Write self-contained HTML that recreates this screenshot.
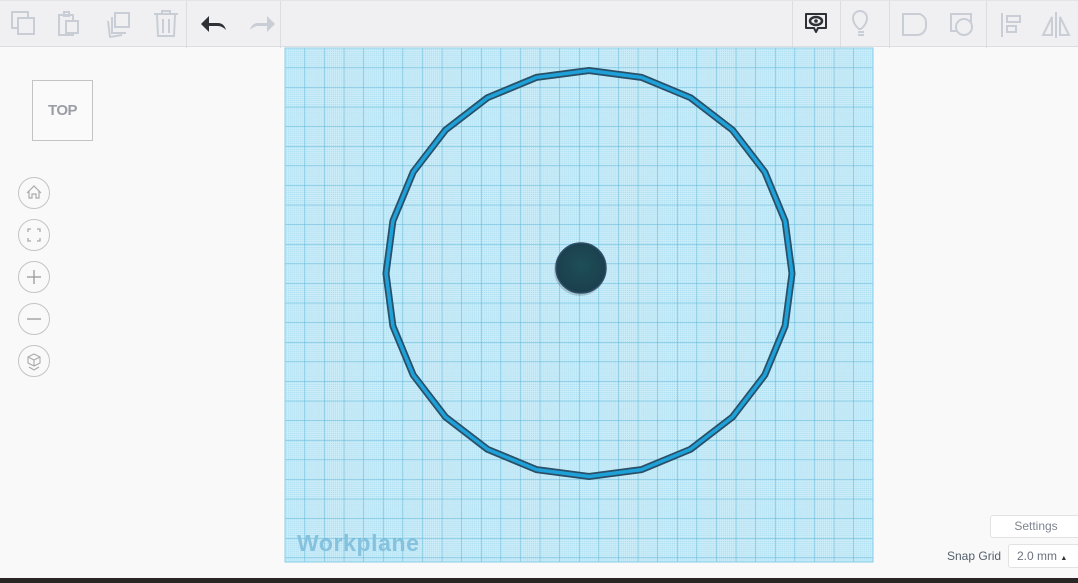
<!DOCTYPE html>
<html><head><style>
body{margin:0;width:1078px;height:583px;overflow:hidden;background:#f9f9f9;font-family:"Liberation Sans",sans-serif;position:relative}
.tb{position:absolute;left:0;top:0;width:1078px;height:47px;background:#f0f0f2;border-bottom:1px solid #dcdde0;border-top:1px solid #e4e4e6;box-sizing:border-box}
.sep{position:absolute;top:0;width:1px;height:47px;background:#dcdde0}
.nav{position:absolute;left:18px;width:32px;height:32px;border:1px solid #c4c4c4;border-radius:50%;box-sizing:border-box}
</style></head><body>
<div class="tb">
<div class="sep" style="left:186px"></div><div class="sep" style="left:280px"></div>
<div class="sep" style="left:792px"></div><div class="sep" style="left:840px"></div><div class="sep" style="left:889px"></div><div class="sep" style="left:986px"></div>
<svg width="1078" height="47" style="position:absolute;left:0;top:0" fill="none" stroke-width="2">
<g stroke="#c9ced6">
<rect x="12" y="11" width="16" height="16"/><rect x="18" y="17" width="16" height="16" fill="#f0f0f2"/>
<rect x="59" y="14" width="14" height="20"/><rect x="66" y="20" width="12" height="12" fill="#f0f0f2"/><rect x="64" y="11" width="5" height="4"/>
<rect x="115" y="12" width="14" height="14"/><path d="M112 16v16h14"/><path d="M108 20l2 16 12-2"/>
<path d="M154 13h24M162 13v-3h8v3M157 14l1 21h16l1-21M163 18v14M169 18v14"/>
</g>
<path d="M206 22h12q6 0 8 7q-4-4-8-4h-12z" fill="#2e3236"/><path d="M201 23l8-8v16z" fill="#2e3236"/>
<path d="M270 22h-12q-6 0-8 7q4-4 8-4h12z" fill="#c9ced6"/><path d="M275 23l-8-8v16z" fill="#c9ced6"/>
<path d="M806 13h20v14h-8l-2 4-2-4h-8z" stroke="#2e3236" stroke-linejoin="round"/><ellipse cx="816" cy="20" rx="6" ry="4" stroke="#2e3236" stroke-width="2.5"/><circle cx="816" cy="20" r="1.8" fill="#2e3236"/>
<g stroke="#c9ced6">
<path d="M859 28q-6-5-6-11a7 7 0 0 1 14 0q0 6-6 11zM858 31h6M858 34h6"/>
<path d="M903 13h17q6 3 6 8v4a9 9 0 0 1-9 9h-14z"/>
<rect x="951" y="13" width="20" height="17"/><circle cx="964" cy="26" r="8" fill="#f0f0f2"/>
<path d="M1002 12v24"/><rect x="1007" y="15" width="13" height="6"/><rect x="1007" y="25" width="9" height="6"/>
<path d="M1056 11v26M1052 16v18h-9zM1060 16l9 18h-9z"/>
</g>
</svg>
</div>
<svg width="1078" height="583" style="position:absolute;left:0;top:0">
<defs>
<pattern id="mn" width="1.96" height="1.96" patternUnits="userSpaceOnUse" x="285" y="48"><rect width="1.96" height="1.96" fill="#aadff2"/><path d="M0.5 0v1.96M0 0.5h1.96" stroke="#d2effa" stroke-width="0.7"/></pattern>
<pattern id="mj" width="19.6" height="19.6" patternUnits="userSpaceOnUse" x="285" y="48"><path d="M0 0v19.6M0 0h19.6" stroke="#5fb6d8" stroke-width="1"/></pattern>
<radialGradient id="dc" cx="0.5" cy="0.45" r="0.55"><stop offset="0" stop-color="#1e4e58"/><stop offset="1" stop-color="#1a3f4c"/></radialGradient>
</defs>
<rect x="285" y="48" width="588" height="514" fill="url(#mn)"/>
<rect x="285" y="48" width="588" height="514" fill="url(#mj)"/>
<rect x="285" y="48" width="588" height="514" fill="none" stroke="#8ccfe9"/>
<text x="297" y="551" font-size="23" font-weight="bold" fill="#86c2de" letter-spacing="0.6">Workplane</text>
<polygon id="pg" fill="none" stroke="#2a5068" stroke-width="7" stroke-linejoin="round" points=""/>
<polygon id="pg2" fill="none" stroke="#1ea0d8" stroke-width="3.5" stroke-linejoin="round" points=""/>
<circle cx="580" cy="270" r="26" fill="#000" opacity="0.15"/>
<circle cx="581" cy="268" r="25" fill="url(#dc)" stroke="#2f4d66" stroke-width="1.5"/>
<rect x="0" y="578" width="1078" height="5" fill="#2a2626"/>
</svg>
<script>
var p=[];for(var i=0;i<24;i++){var a=i*Math.PI/12;p.push((589+203*Math.sin(a)).toFixed(1)+","+(273.5-203*Math.cos(a)).toFixed(1));}
document.getElementById('pg').setAttribute('points',p.join(' '));document.getElementById('pg2').setAttribute('points',p.join(' '));
</script>
<div style="position:absolute;left:32px;top:80px;width:61px;height:61px;border:1px solid #c4c4c4;box-sizing:border-box;background:#fafafa;text-align:center;line-height:60px;font-size:15px;font-weight:bold;color:#9a9ea4;letter-spacing:-0.5px">TOP</div>
<div class="nav" style="top:177px"><svg width="30" height="30"><path d="M8 15l7-7 7 7M10 13v7h3v-4h4v4h3v-7" fill="none" stroke="#aaa" stroke-width="1.2"/></svg></div>
<div class="nav" style="top:219px"><svg width="30" height="30"><path d="M9 12v-3h3M18 9h3v3M21 18v3h-3M12 21h-3v-3" fill="none" stroke="#aaa" stroke-width="1.3"/></svg></div>
<div class="nav" style="top:261px"><svg width="30" height="30"><path d="M15 8v14M8 15h14" stroke="#999" stroke-width="1.3"/></svg></div>
<div class="nav" style="top:303px"><svg width="30" height="30"><path d="M8 15h14" stroke="#999" stroke-width="1.3"/></svg></div>
<div class="nav" style="top:345px"><svg width="30" height="30"><path d="M15 8l6 3v6l-6 3-6-3v-6zM9 11l6 3 6-3M15 14v6M10 21l5 3 5-3" fill="none" stroke="#aaa" stroke-width="1.1"/></svg></div>
<div style="position:absolute;left:990px;top:515px;width:90px;height:21px;border:1px solid #e2e2e2;border-radius:3px;background:#fff;font-size:12px;color:#7d8690;text-align:center;line-height:20px">Settings</div>
<div style="position:absolute;left:947px;top:549px;font-size:12px;color:#55606c">Snap Grid</div>
<div style="position:absolute;left:1008px;top:544px;width:72px;height:24px;border:1px solid #e2e2e2;border-radius:3px;background:#fff;font-size:12px;color:#6a737c;line-height:23px;padding-left:8px;box-sizing:border-box">2.0 mm <span style="font-size:7px;color:#333">▲</span></div>
</body></html>
